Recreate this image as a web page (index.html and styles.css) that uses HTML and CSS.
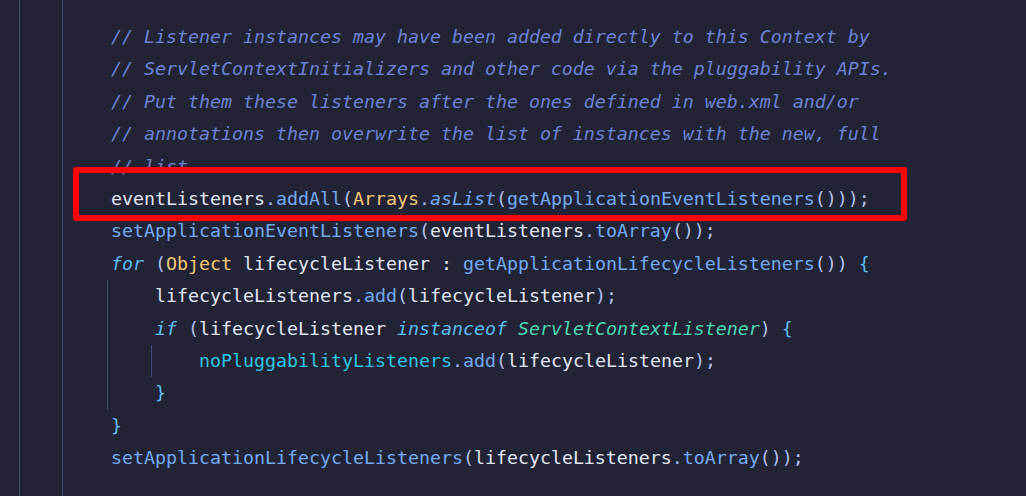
FILE: index.html
```html
<!doctype html>
<html>

<head>
    <title>Editor</title>
    <meta charset="utf-8">
    <link rel="stylesheet" href="styles.css">
</head>

<body>
    <div class="editor">
        <div class="guide outer">
            <div class="guide code">
                <div class="line cm">// Listener instances may have been added directly to this Context by</div>
                <div class="line cm">// ServletContextInitializers and other code via the pluggability APIs.</div>
                <div class="line cm">// Put them these listeners after the ones defined in web.xml and/or</div>
                <div class="line cm">// annotations then overwrite the list of instances with the new, full</div>
                <div class="line cm">// list</div>
                <div class="line">eventListeners<span class="dot">.</span><span class="fn">addAll</span><span class="pa">(</span><span class="ty">Arrays</span><span class="dot">.</span><span class="fn it">asList</span><span class="pa">(</span><span class="fn">getApplicationEventListeners</span><span class="pa">()));</span></div>
                <div class="line"><span class="fn">setApplicationEventListeners</span><span class="pa">(</span>eventListeners<span class="dot">.</span><span class="fn">toArray</span><span class="pa">());</span></div>
                <div class="line"><span class="kw">for</span> <span class="pa">(</span><span class="ty">Object</span> lifecycleListener : <span class="fn">getApplicationLifecycleListeners</span><span class="pa">())</span> <span class="br">{</span></div>
                <div class="guide block">
                    <div class="line">lifecycleListeners<span class="dot">.</span><span class="fn">add</span><span class="pa">(</span>lifecycleListener<span class="pa">);</span></div>
                    <div class="line"><span class="kw">if</span> <span class="pa">(</span>lifecycleListener <span class="kw">instanceof</span> <span class="cl">ServletContextListener</span><span class="pa">)</span> <span class="br">{</span></div>
                    <div class="guide block">
                        <div class="line"><span class="fd">noPluggabilityListeners</span><span class="dot">.</span><span class="fn">add</span><span class="pa">(</span>lifecycleListener<span class="pa">);</span></div>
                    </div>
                    <div class="line"><span class="br">}</span></div>
                </div>
                <div class="line"><span class="br">}</span></div>
                <div class="line"><span class="fn">setApplicationLifecycleListeners</span><span class="pa">(</span>lifecycleListeners<span class="dot">.</span><span class="fn">toArray</span><span class="pa">());</span></div>
            </div>
        </div>
        <div class="mark"></div>
    </div>
</body>

</html>
```

FILE: styles.css
```css
html, body {
    margin: 0;
    background-color: #222436;
}

.editor {
    position: relative;
    height: 496px;
    overflow: hidden;
    padding-left: 19px;
    font-family: "DejaVu Sans Mono", "Liberation Mono", monospace;
    font-size: 18.27px;
    color: #e2e6f4;
}

.guide {
    border-left: 1px solid #454c7e;
}

.outer {
    height: 496px;
    padding-left: 42px;
}

.code {
    height: 475px;
    padding-top: 21px;
    padding-left: 48px;
}

.block {
    margin-left: -4px;
    padding-left: 47px;
}

.line {
    height: 32.4px;
    line-height: 32.4px;
    white-space: pre;
}

.cm {
    color: #6e82d4;
    font-style: italic;
}

.fn {
    color: #74aaf4;
}

.it {
    font-style: italic;
}

.pa {
    color: #b4c0ee;
}

.dot {
    color: #9fb6ee;
}

.ty {
    color: #f5c97a;
}

.kw {
    color: #5fbcf4;
    font-style: italic;
}

.br {
    color: #5fbcf4;
}

.cl {
    color: #4fd6b4;
    font-style: italic;
}

.fd {
    color: #2cc4e0;
}

/* annotation box drawn over the highlighted line */
.mark {
    position: absolute;
    left: 73px;
    top: 167px;
    width: 822px;
    height: 42px;
    border: 6px solid #fe0000;
    border-radius: 3px;
}
```
